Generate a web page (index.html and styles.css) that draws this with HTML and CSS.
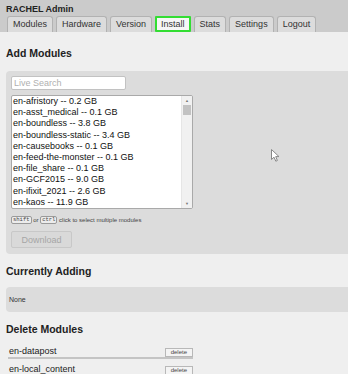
FILE: index.html
```html
<!DOCTYPE html>
<html lang="en">
<head>
  <meta charset="UTF-8">
  <meta name="viewport" content="width=device-width, initial-scale=1.0">
  <title>RACHEL Admin - Install</title>
  <link rel="stylesheet" href="styles.css">
</head>
<body>
  <div class="header">
    <div class="title">RACHEL Admin</div>
    <ul class="tabs">
      <li><a href="#">Modules</a></li>
      <li><a href="#">Hardware</a></li>
      <li><a href="#">Version</a></li>
      <li class="active"><a href="#">Install</a></li>
      <li><a href="#">Stats</a></li>
      <li><a href="#">Settings</a></li>
      <li><a href="#">Logout</a></li>
    </ul>
  </div>

  <div class="content">
    <h2 class="first">Add Modules</h2>
    <div class="panel">
      <input type="text" class="search" placeholder="Live Search">
      <!-- module list, drawn as a listbox with its own scrollbar -->
      <div class="listbox" role="listbox" aria-multiselectable="true">
        <ul class="options">
          <li>en-afristory -- 0.2 GB</li>
          <li>en-asst_medical -- 0.1 GB</li>
          <li>en-boundless -- 3.8 GB</li>
          <li>en-boundless-static -- 3.4 GB</li>
          <li>en-causebooks -- 0.1 GB</li>
          <li>en-feed-the-monster -- 0.1 GB</li>
          <li>en-file_share -- 0.1 GB</li>
          <li>en-GCF2015 -- 9.0 GB</li>
          <li>en-ifixit_2021 -- 2.6 GB</li>
          <li>en-kaos -- 11.9 GB</li>
        </ul>
        <div class="scrollbar">
          <span class="arrow">&#9650;</span>
          <span class="thumb"></span>
          <span class="track"></span>
          <span class="arrow">&#9660;</span>
        </div>
      </div>
      <p class="hint"><kbd>shift</kbd> or <kbd>ctrl</kbd> click to select multiple modules</p>
      <button class="download" disabled>Download</button>
    </div>

    <h2>Currently Adding</h2>
    <div class="panel status">None</div>

    <h2 class="tight">Delete Modules</h2>
    <div class="row"><span>en-datapost</span><button class="del">delete</button></div>
    <div class="row"><span>en-local_content</span><button class="del">delete</button></div>
  </div>

  <!-- mouse pointer left over the page -->
  <svg class="pointer" width="10" height="13" viewBox="0 0 10 13">
    <path d="M0.5 0.5 L0.5 10.5 L3 8.2 L4.8 12.2 L6.4 11.5 L4.7 7.6 L8 7.6 Z" fill="#fff" stroke="#888" stroke-width="1"/>
  </svg>
</body>
</html>
```

FILE: styles.css
```css
html {
  overflow: hidden;
}
body {
  margin: 0;
  font-family: "Liberation Sans", Arial, sans-serif;
  font-size: 9px;
  background-color: #efefef;
  color: #222;
}
.header {
  background-color: #cbcbcb;
  padding: 4px 0 0 6px;
}
.title {
  font-weight: bold;
  line-height: 11px;
  margin-bottom: 1px;
}
.tabs {
  display: flex;
  gap: 3px;
  margin: 0;
  padding: 0 0 0 1px;
  list-style: none;
}
.tabs a {
  display: block;
  height: 15px;
  line-height: 15px;
  padding: 0 5px;
  border: 1px solid #b2b2b2;
  border-bottom: none;
  border-radius: 3px 3px 0 0;
  background-color: #dcdcdc;
  color: #333;
  text-decoration: none;
}
.tabs .active a {
  height: 12px;
  line-height: 13px;
  padding: 0 4px;
  border: 2px solid #33dd33;
  border-radius: 1px;
  background-color: #f6f6f6;
}
.content {
  padding-left: 6px;
}
h2 {
  font-size: 10.5px;
  line-height: 12px;
  margin: 11px 0 10px;
}
h2.first {
  margin: 15px 0 12px;
}
h2.tight {
  margin-bottom: 6px;
}
.panel {
  background-color: #dcdcdc;
  border-radius: 4px;
  margin-right: -20px;
  padding: 5px 5px 6px;
}
.search {
  display: block;
  box-sizing: border-box;
  width: 115px;
  height: 14px;
  margin: 0 0 5px;
  padding: 0 2px;
  border: 1px solid #c2c2c2;
  border-radius: 2px;
  font-family: "Liberation Sans", Arial, sans-serif;
  font-size: 9px;
  background-color: #fff;
}
.search::placeholder {
  color: #b0b0b0;
}
.listbox {
  display: flex;
  box-sizing: border-box;
  width: 182px;
  height: 114px;
  border: 1px solid #a9a9a9;
  border-radius: 2px;
  background-color: #fff;
  overflow: hidden;
}
.options {
  flex: 1;
  margin: 0;
  padding: 0 0 0 1px;
  list-style: none;
  overflow: hidden;
  color: #111;
}
.options li {
  height: 11.2px;
  line-height: 11.2px;
  white-space: nowrap;
}
.scrollbar {
  display: flex;
  flex-direction: column;
  width: 10px;
  background-color: #f1f1f1;
  border-left: 1px solid #e6e6e6;
}
.arrow {
  height: 9px;
  line-height: 9px;
  font-size: 4px;
  text-align: center;
  color: #777;
}
.thumb {
  height: 10px;
  margin: 0 1px;
  background-color: #c2c2c2;
}
.track {
  flex: 1;
}
.hint {
  margin: 6px 0 6px;
  font-size: 6px;
  line-height: 10px;
  color: #444;
}
kbd {
  display: inline-block;
  font-family: "Liberation Mono", monospace;
  font-size: 5.5px;
  line-height: 6px;
  padding: 0 1px;
  border: 1px solid #9a9a9a;
  border-radius: 2px;
  background-color: #ececec;
  vertical-align: middle;
}
.download {
  display: block;
  width: 61px;
  height: 17px;
  padding: 0;
  border: 1px solid #c8c8c8;
  border-radius: 2px;
  background-color: #d9d9d9;
  color: #a6a6a6;
  font-family: "Liberation Sans", Arial, sans-serif;
  font-size: 9px;
}
.status {
  height: 25px;
  line-height: 25px;
  padding: 0 3px;
  font-size: 7px;
  color: #333;
}
.row {
  display: flex;
  justify-content: space-between;
  align-items: flex-end;
  width: 184px;
  height: 12px;
  margin-left: 2px;
  padding: 4px 0 0 1px;
  line-height: 12px;
  border-bottom: 2px solid #c4c4c4;
}
.del {
  height: 9px;
  padding: 0 5px;
  border: 1px solid #b8b8b8;
  background-color: #f4f4f4;
  color: #444;
  font-family: "Liberation Sans", Arial, sans-serif;
  font-size: 6px;
  line-height: 7px;
}
.pointer {
  position: absolute;
  left: 271px;
  top: 149px;
}
```
